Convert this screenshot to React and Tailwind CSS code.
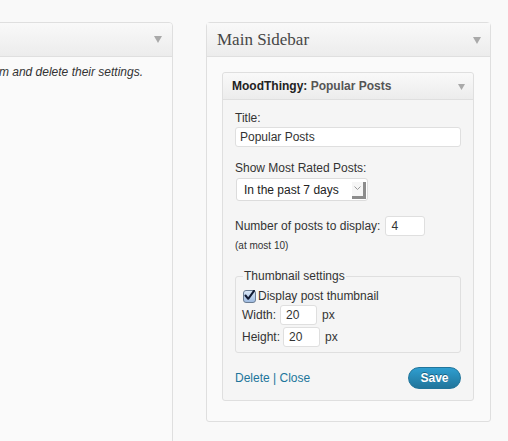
import React from "react";

function Tri({ className = "" }) {
  return (
    <svg width="8" height="7" viewBox="0 0 8 7" className={className}>
      <path d="M0 0 H8 L4 7 Z" fill="#a9a9a9" />
    </svg>
  );
}

export default function App() {
  return (
    <div
      className="h-[441px] w-[508px] overflow-hidden bg-[#f9f9f9] flex items-start pt-[22px] text-[#333]"
      style={{ fontFamily: '"Liberation Sans", Arial, sans-serif' }}
    >
      {/* Left panel (clipped) */}
      <div className="-ml-px w-[174px] shrink-0 h-[440px] border border-[#dfdfdf] rounded-tr-[4px] bg-[#fafafa] overflow-hidden flex flex-col">
        <div className="h-[34px] shrink-0 border-b border-[#dfdfdf] bg-gradient-to-b from-[#f9f9f9] to-[#ececec] flex items-center justify-end pr-[10px]">
          <Tri />
        </div>
        <div className="flex justify-end pr-[29px] pt-[7px]">
          <span className="whitespace-nowrap italic text-[12px] leading-[16px] text-[#333]">
            Drag widgets back here to deactivate them and delete their settings.
          </span>
        </div>
      </div>

      {/* Right panel */}
      <div className="ml-[33px] w-[285px] shrink-0 border border-[#dfdfdf] rounded-t-[4px] rounded-b-[3px] bg-[#fafafa]">
        <div className="h-[34px] border-b border-[#dfdfdf] bg-gradient-to-b from-[#f9f9f9] to-[#ececec] flex items-center justify-between pl-[10px] pr-[9px]">
          <span
            className="text-[17px] leading-[20px] text-[#464646]"
            style={{ fontFamily: '"Liberation Serif", Georgia, serif' }}
          >
            Main Sidebar
          </span>
          <Tri className="mt-[2px]" />
        </div>

        <div className="pl-[15px] pr-[16px] pt-[15px] pb-[20px]">
          <div className="border border-[#dfdfdf] rounded-[3px] bg-[#f5f5f5]">
            <div className="h-[27px] border-b border-[#dfdfdf] bg-gradient-to-b from-[#f9f9f9] to-[#ececec] flex items-center justify-between pl-[9px] pr-[8px] rounded-t-[3px]">
              <span className="text-[12px] font-bold leading-[16px]">
                <span className="text-[#222]">MoodThingy:</span>{" "}
                <span className="text-[#555]">Popular Posts</span>
              </span>
              <svg width="7" height="6" viewBox="0 0 7 6" className="mt-[2px]">
                <path d="M0 0 H7 L3.5 6 Z" fill="#a9a9a9" />
              </svg>
            </div>

            <div className="pl-[12px] pr-[11px] pt-[10px] pb-[11px] text-[12px] leading-[16px]">
              <div>Title:</div>
              <div className="mt-px h-[20px] w-[226px] border border-[#dfdfdf] rounded-[3px] bg-white flex items-center pl-[4px]">
                Popular Posts
              </div>

              <div className="mt-[13px]">Show Most Rated Posts:</div>
              <div className="mt-[2px] ml-px h-[23px] w-[132px] border border-[#dcdcdc] rounded-[3px] bg-white flex justify-between pl-[7px] pr-[1px]">
                <span className="self-center text-[#222]">In the past 7 days</span>
                <span className="mt-[3px] mb-px h-[17px] w-[14px] bg-[#f6f6f6] border-r-[3px] border-b-[3px] border-[#8c8c8c] flex items-start justify-center pt-[4px]">
                  <svg width="7" height="4" viewBox="0 0 7 4">
                    <path d="M0.5 0.5 L3.5 3.5 L6.5 0.5" fill="none" stroke="#9a9a9a" strokeWidth="1" />
                  </svg>
                </span>
              </div>

              <div className="mt-[15px] h-[20px] flex items-center gap-[5px]">
                <span>Number of posts to display:</span>
                <div className="h-[20px] w-[40px] border border-[#dfdfdf] rounded-[3px] bg-white flex items-center pl-[5px]">
                  4
                </div>
              </div>
              <div className="mt-[4px] text-[10px] leading-[12px]">(at most 10)</div>

              <fieldset className="mt-[16px] w-[226px] border border-[#dfdfdf] rounded-[3px] pl-[6px] pr-[6px] pb-[5px]">
                <legend className="px-[1px] ml-px leading-[16px]">Thumbnail settings</legend>
                <div className="mt-[4px] h-[16px] flex items-center gap-[2px]">
                  <span className="h-[13px] w-[13px] ml-px rounded-[3px] border border-[#6b7d93] bg-gradient-to-b from-[#dbe8f7] to-[#9fbbe0] flex items-center justify-center">
                    <svg width="11" height="11" viewBox="0 0 11 11" className="-mt-[2px]">
                      <path d="M1.5 5.5 L4.2 8.8 L10 0.8" fill="none" stroke="#111a33" strokeWidth="2" strokeLinecap="round" strokeLinejoin="round" />
                    </svg>
                  </span>
                  <span>Display post thumbnail</span>
                </div>
                <div className="mt-px h-[20px] flex items-center">
                  <span>Width:</span>
                  <div className="ml-[4px] h-[20px] w-[37px] border border-[#dfdfdf] rounded-[3px] bg-white flex items-center pl-[5px]">
                    20
                  </div>
                  <span className="ml-[5px]">px</span>
                </div>
                <div className="mt-[2px] h-[20px] flex items-center">
                  <span>Height:</span>
                  <div className="ml-[3px] h-[20px] w-[37px] border border-[#dfdfdf] rounded-[3px] bg-white flex items-center pl-[5px]">
                    20
                  </div>
                  <span className="ml-[5px]">px</span>
                </div>
              </fieldset>

              <div className="mt-[14px] h-[22px] w-[226px] flex items-center justify-between">
                <span className="text-[#21759b]">Delete | Close</span>
                <button className="h-[22px] w-[53px] rounded-full border border-[#21759b] bg-gradient-to-b from-[#2e9ed0] to-[#21759b] text-white font-bold text-[12px] leading-[16px] [text-shadow:0_-1px_0_rgba(0,0,0,0.35)]">
                  Save
                </button>
              </div>
            </div>
          </div>
        </div>
      </div>
    </div>
  );
}
